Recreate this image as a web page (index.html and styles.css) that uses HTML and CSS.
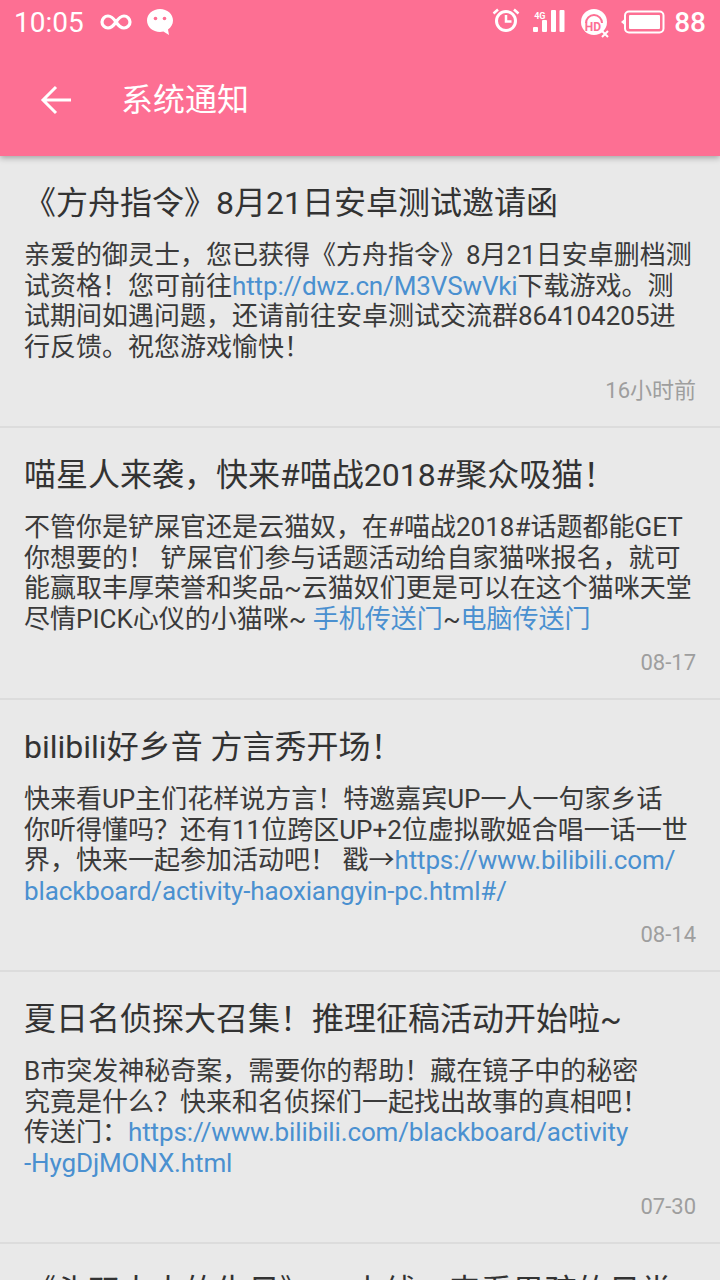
FILE: index.html
```
<!DOCTYPE html>
<html lang="zh">
<head>
<meta charset="utf-8">
<title>系统通知</title>
<link rel="stylesheet" href="styles.css">
</head>
<body>
<header class="appbar">
  <div class="status">
    <div class="status-group">
      <span class="time">10:05</span>
      <svg class="ic-loop" viewBox="0 0 32 16"><path d="M16 8C13 3.500 11 2 8 2a6 6 0 0 0 0 12c3 0 5-1.500 8-6c3-4.500 5-6 8-6a6 6 0 0 1 0 12c-3 0-5-1.500-8-6z" fill="none" stroke="#fff" stroke-width="3.200"/></svg>
      <svg class="ic-chat" viewBox="0 0 28 28"><path d="M14 1C6.800 1 1 6 1 12.500S6.800 24 14 24c1.200 0 2.300-.1 3.400-.4L23 27l-1-5.500c3-2.100 5-5.300 5-9C27 6 21.200 1 14 1z" fill="#fff"/><circle cx="9.500" cy="10.500" r="1.800" fill="#fd6f93"/><circle cx="18.500" cy="10.500" r="1.800" fill="#fd6f93"/></svg>
    </div>
    <div class="status-group right">
      <svg class="ic-alarm" viewBox="0 0 28 24"><circle cx="14" cy="13" r="9.500" fill="none" stroke="#fff" stroke-width="3"/><path d="M14 7v6.500h5.500" fill="none" stroke="#fff" stroke-width="2.500"/><path d="M1.500 5.500l4.500-4M26.500 5.500l-4.500-4" stroke="#fff" stroke-width="2.500"/></svg>
      <div class="signal">
        <span class="net">4G</span>
        <svg viewBox="0 0 32 24"><rect x="0" y="17" width="5" height="5" rx="1" fill="#fff"/><rect x="9" y="10" width="5" height="12" rx="1" fill="#fff"/><rect x="18" y="0" width="5" height="22" rx="1" fill="#fff"/><rect x="26.500" y="0" width="5" height="22" rx="1" fill="#fff"/></svg>
      </div>
      <svg class="ic-hd" viewBox="0 0 30 30"><circle cx="14" cy="14" r="13" fill="#fff"/><path d="M6 15a8 8 0 0 1 16 0" fill="none" stroke="#fd6f93" stroke-width="2"/><text x="13" y="23" class="hd-text">HD</text><path d="M22 23l6 6M28 23l-6 6" stroke="#fff" stroke-width="2"/></svg>
      <svg class="ic-battery" viewBox="0 0 44 24"><path d="M3 9.500L0 12l3 2.500z" fill="#fff"/><rect x="4" y="1.500" width="38.500" height="21" rx="4" fill="none" stroke="#fff" stroke-width="2"/><rect x="8" y="5" width="31" height="14" rx="1" fill="#fff"/></svg>
      <span class="level">88</span>
    </div>
  </div>
  <div class="toolbar">
    <svg class="ic-back" viewBox="0 0 32 32"><path d="M31 16H3M16 3L3 16l13 13" fill="none" stroke="#fff" stroke-width="3"/></svg>
    <h1 class="page-title">系统通知</h1>
  </div>
</header>
<main class="list">
  <article class="notice">
    <h2 class="notice-title">《方舟指令》8月21日安卓测试邀请函</h2>
    <p class="notice-body">亲爱的御灵士，您已获得《方舟指令》8月21日安卓删档测<br>试资格！您可前往<a class="link url">http://dwz.cn/M3VSwVki</a>下载游戏。测<br>试期间如遇问题，还请前往安卓测试交流群864104205进<br>行反馈。祝您游戏愉快！</p>
    <time class="notice-time">16小时前</time>
  </article>
  <article class="notice">
    <h2 class="notice-title">喵星人来袭，快来#喵战2018#聚众吸猫！</h2>
    <p class="notice-body">不管你是铲屎官还是云猫奴，在#喵战2018#话题都能GET<br>你想要的！ 铲屎官们参与话题活动给自家猫咪报名，就可<br>能赢取丰厚荣誉和奖品~云猫奴们更是可以在这个猫咪天堂<br>尽情PICK心仪的小猫咪~ <a class="link">手机传送门</a>~<a class="link">电脑传送门</a></p>
    <time class="notice-time">08-17</time>
  </article>
  <article class="notice">
    <h2 class="notice-title">bilibili好乡音 方言秀开场！</h2>
    <p class="notice-body">快来看UP主们花样说方言！特邀嘉宾UP一人一句家乡话<br>你听得懂吗？还有11位跨区UP+2位虚拟歌姬合唱一话一世<br>界，快来一起参加活动吧！ 戳→<a class="link url">https://www.bilibili.com/<br>blackboard/activity-haoxiangyin-pc.html#/</a></p>
    <time class="notice-time">08-14</time>
  </article>
  <article class="notice">
    <h2 class="notice-title">夏日名侦探大召集！推理征稿活动开始啦~</h2>
    <p class="notice-body">B市突发神秘奇案，需要你的帮助！藏在镜子中的秘密<br>究竟是什么？快来和名侦探们一起找出故事的真相吧！<br>传送门：<a class="link url">https://www.bilibili.com/blackboard/activity<br>-HygDjMONX.html</a></p>
    <time class="notice-time">07-30</time>
  </article>
  <article class="notice">
    <h2 class="notice-title">《头双大大的生日》PV上线，来看男孩的日常</h2>
  </article>
</main>
</body>
</html>
```
FILE: styles.css
```
* { box-sizing: border-box; }
html, body { margin: 0; padding: 0; }
body {
  width: 720px;
  height: 1280px;
  overflow: hidden;
  background: #e9e9e9;
  font-family: Roboto, "Noto Sans CJK SC", sans-serif;
  color: #333;
}
.appbar {
  position: relative;
  z-index: 1;
  height: 156px;
  background: #fd6f93;
  color: #fff;
  box-shadow: 0 2px 6px rgba(0,0,0,.3);
}
.status {
  height: 44px;
  padding: 0 14px;
  display: flex;
  justify-content: space-between;
  align-items: center;
}
.status-group { display: flex; align-items: center; }
.time { font-size: 28px; width: 86px; }
.ic-loop { width: 32px; height: 16px; }
.ic-chat { width: 28px; height: 28px; margin-left: 14px; }
.ic-alarm { width: 28px; height: 24px; margin-top: -4px; }
.signal { position: relative; width: 32px; height: 24px; margin-left: 13px; margin-top: -1px; }
.signal svg { position: absolute; left: 0; top: 0; width: 32px; height: 24px; }
.net { position: absolute; left: 1px; top: 1px; font-size: 9px; font-weight: 700; line-height: 10px; }
.ic-hd { width: 30px; height: 30px; margin-left: 15px; margin-top: 2px; }
.hd-text { font: 700 12px Roboto, sans-serif; fill: #fd6f93; text-anchor: middle; }
.ic-battery { width: 44px; height: 24px; margin-left: 11px; }
.level { font-size: 28px; margin-left: 9px; font-weight: 500; }
.toolbar {
  height: 112px;
  display: flex;
  align-items: center;
  padding-left: 40px;
}
.ic-back { width: 32px; height: 32px; }
.page-title {
  margin: 0 0 0 49px;
  font-size: 32px;
  font-weight: 400;
  line-height: 1;
}
.notice {
  height: 272px;
  padding: 24px 24px 0;
  border-bottom: 2px solid #dcdcdc;
  display: flex;
  flex-direction: column;
}
.notice-title {
  margin: 0;
  font-size: 32px;
  font-weight: 400;
  line-height: 46px;
  white-space: nowrap;
}
.notice-body {
  margin: 14px 0 0;
  font-size: 26px;
  line-height: 30.7px;
  white-space: nowrap;
  color: #3a3a3a;
}
.link { color: #4a90d0; }
.url { letter-spacing: -0.13px; }
.notice-time {
  margin-top: auto;
  margin-bottom: 20px;
  align-self: flex-end;
  font-size: 22px;
  line-height: 30px;
  color: #9e9e9e;
}
```
